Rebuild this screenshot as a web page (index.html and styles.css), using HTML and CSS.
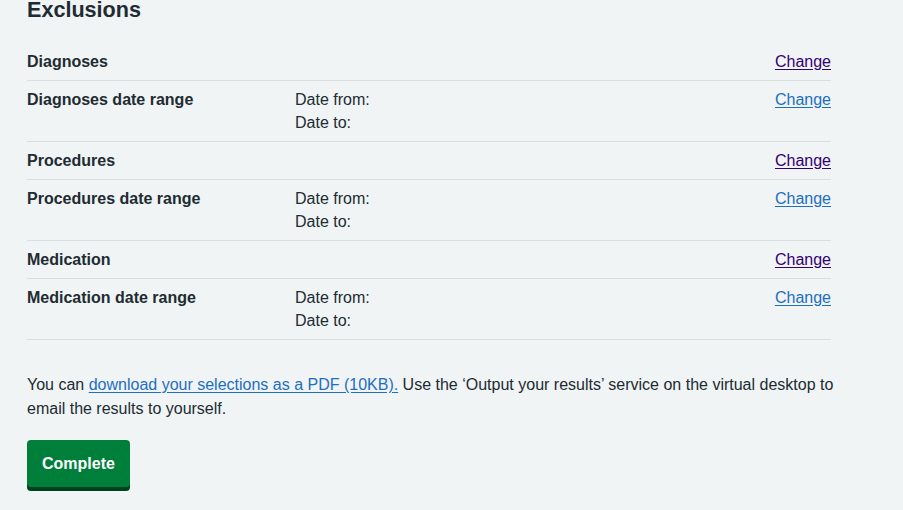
FILE: index.html
```html
<!DOCTYPE html>
<html lang="en">
<head>
<meta charset="utf-8">
<title>Exclusions</title>
<link rel="stylesheet" href="styles.css">
</head>
<body>
<main class="page">
  <h2 class="heading">Exclusions</h2>
  <dl class="summary">
    <div class="row">
      <dt class="key">Diagnoses</dt>
      <dd class="value"></dd>
      <dd class="action"><a class="link visited" href="#">Change</a></dd>
    </div>
    <div class="row">
      <dt class="key">Diagnoses date range</dt>
      <dd class="value">Date from:<br>Date to:</dd>
      <dd class="action"><a class="link" href="#">Change</a></dd>
    </div>
    <div class="row">
      <dt class="key">Procedures</dt>
      <dd class="value"></dd>
      <dd class="action"><a class="link visited" href="#">Change</a></dd>
    </div>
    <div class="row">
      <dt class="key">Procedures date range</dt>
      <dd class="value">Date from:<br>Date to:</dd>
      <dd class="action"><a class="link" href="#">Change</a></dd>
    </div>
    <div class="row">
      <dt class="key">Medication</dt>
      <dd class="value"></dd>
      <dd class="action"><a class="link visited" href="#">Change</a></dd>
    </div>
    <div class="row">
      <dt class="key">Medication date range</dt>
      <dd class="value">Date from:<br>Date to:</dd>
      <dd class="action"><a class="link" href="#">Change</a></dd>
    </div>
  </dl>
  <p class="info">You can <a class="link" href="#">download your selections as a PDF (10KB).</a> Use the ‘Output your results’ service on the virtual desktop to email the results to yourself.</p>
  <div class="actions">
    <button class="button" type="button">Complete</button>
  </div>
</main>
</body>
</html>
```

FILE: styles.css
```css
html, body {
  margin: 0;
  padding: 0;
  background: #f0f4f5;
}
body {
  font-family: "Liberation Sans", Arial, sans-serif;
  font-size: 16px;
  color: #212b32;
}
.page {
  padding: 0 0 40px 27px;
  width: 804px;
}
.heading {
  font-size: 21.6px;
  line-height: 26px;
  font-weight: 700;
  margin: -3px 0 20px 0;
}
.summary {
  margin: 0;
  padding: 0;
}
.row {
  display: grid;
  grid-template-columns: 268px 1fr auto;
  border-bottom: 1px solid #d8dde0;
  line-height: 23px;
}
.key, .value, .action {
  margin: 0;
  padding: 7px 0;
}
.key {
  font-weight: 700;
}
.action {
  text-align: right;
}
.link {
  color: #1d6fbf;
  text-decoration: underline;
  text-underline-offset: 2px;
}
.link.visited {
  color: #330072;
}
.info {
  margin: 33px 0 19px 0;
  line-height: 24px;
  width: 815px;
}
.actions {
  padding-bottom: 8px;
}
.button {
  display: block;
  font-family: "Liberation Sans", Arial, sans-serif;
  font-size: 16px;
  font-weight: 700;
  line-height: 23px;
  color: #ffffff;
  background: #007f3b;
  border: 0;
  border-radius: 4px;
  padding: 12px 15px;
  box-shadow: 0 4px 0 #00401e;
  cursor: pointer;
}
```
